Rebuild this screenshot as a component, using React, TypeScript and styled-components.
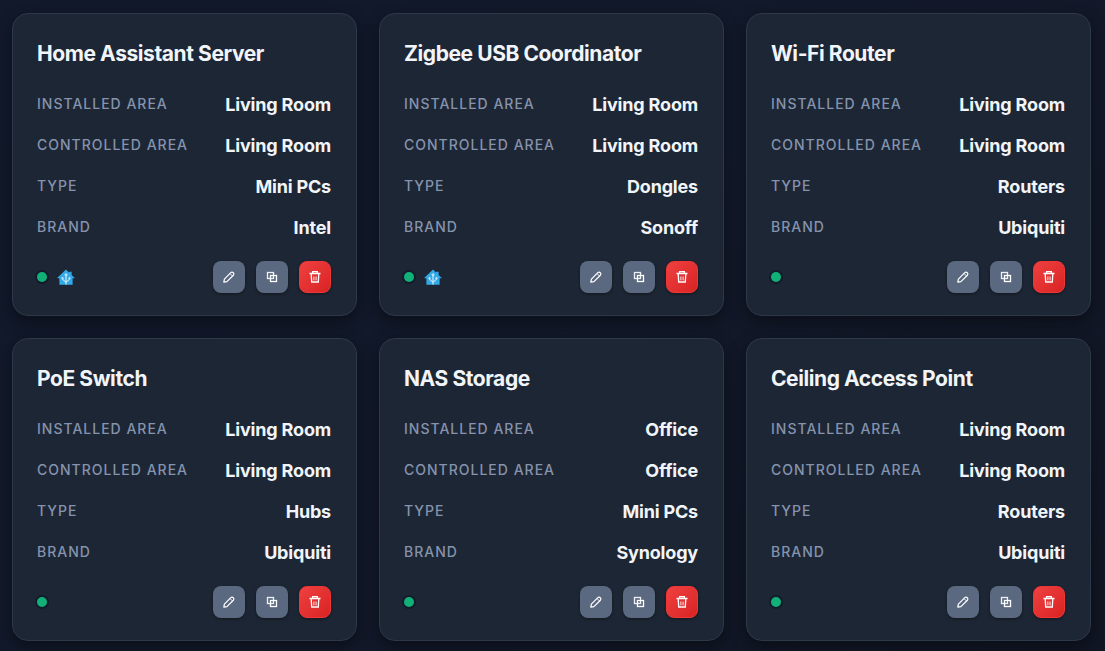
import React from "react";
import styled, { createGlobalStyle } from "styled-components";

const GlobalStyle = createGlobalStyle`
  *, *::before, *::after { box-sizing: border-box; }
  body {
    margin: 0;
    min-height: 100vh;
    background: linear-gradient(135deg, #11192b 0%, #12192a 50%, #111624 100%);
    color: #f1f5f9;
    font-family: Inter, "Liberation Sans", sans-serif;
    -webkit-font-smoothing: antialiased;
  }
`;

const Grid = styled.main`
  display: grid;
  grid-template-columns: repeat(3, minmax(0, 1fr));
  gap: 22px;
  padding: 13px 14px 10px 12px;
`;

const Card = styled.article`
  padding: 24px 25px 22px 24px;
  border: 1px solid #2d3848;
  border-radius: 16px;
  background: #1d2634;
  box-shadow: 0 6px 16px rgba(0, 0, 0, 0.4);
`;

const Title = styled.h2`
  margin: 0 0 15px;
  font-size: 21px;
  line-height: 32px;
  font-weight: 700;
  letter-spacing: -0.02em;
`;

const Details = styled.dl`
  display: flex;
  flex-direction: column;
  gap: 1px;
  margin: 0 0 13px;
`;

const Detail = styled.div`
  display: flex;
  align-items: center;
  justify-content: space-between;
  height: 40px;
`;

const Label = styled.dt`
  padding-bottom: 2px;
  color: #8593ad;
  font-size: 14px;
  line-height: 20px;
  font-weight: 500;
  letter-spacing: 1px;
  text-transform: uppercase;
`;

const Value = styled.dd`
  margin: 0;
  font-size: 18px;
  line-height: 26px;
  font-weight: 700;
  letter-spacing: -0.01em;
`;

const Footer = styled.footer`
  display: flex;
  align-items: center;
  justify-content: space-between;
`;

const Status = styled.div`
  display: flex;
  align-items: center;
  gap: 10px;
`;

const Dot = styled.span`
  width: 10px;
  height: 10px;
  border-radius: 50%;
  background: #10b078;
  box-shadow: 0 0 0 2px #131c2c;
`;

const Actions = styled.div`
  display: flex;
  gap: 11px;
`;

const ActionButton = styled.button<{ $danger?: boolean }>`
  display: grid;
  place-items: center;
  width: 32px;
  height: 32px;
  padding: 0;
  border: ${(p) => (p.$danger ? "1px solid #ef3636" : "0")};
  border-radius: 8px;
  background: ${(p) =>
    p.$danger ? "linear-gradient(135deg, #ef4040, #d92323)" : "#5b6980"};
  color: #fff;
  box-shadow: 0 1px 3px rgba(0, 0, 0, 0.4);
  cursor: pointer;
`;

const PencilIcon = () => (
  <svg width="14" height="14" viewBox="0 0 14 14" fill="none" stroke="currentColor" strokeWidth="1.2" strokeLinejoin="round" aria-hidden="true">
    <path d="M1.8 12.2 2.4 9.1 8.8 2.6Q10 1.5 11.3 2.7 12.5 3.9 11.4 5.2L4.9 11.6Z" />
    <path d="M8.1 3.6 10.4 5.9" strokeWidth="1" />
  </svg>
);

const CopyIcon = () => (
  <svg width="12" height="12" viewBox="0 0 12 12" fill="none" stroke="currentColor" strokeWidth="1.3" aria-hidden="true">
    <rect x="1.5" y="1.5" width="6" height="6" opacity=".9" />
    <rect x="4.5" y="4.5" width="6" height="6" />
  </svg>
);

const TrashIcon = () => (
  <svg width="12" height="14" viewBox="0 0 12 14" fill="none" stroke="currentColor" strokeWidth="1.3" aria-hidden="true">
    <path d="M.5 3.5H11.5M3.6 3.3V1.6H8.4V3.3M2.2 3.7 2.7 12H9.3L9.8 3.7" />
    <path d="M4.9 6.5V10.4M7.1 6.5V10.4" strokeWidth=".9" />
  </svg>
);

const HomeIcon = () => (
  <svg width="18" height="18" viewBox="0 0 18 18" role="img" aria-label="Home Assistant">
    <path d="M9 1.6 12.2 4.7V3.8H14.6V7L17.6 9.8V10.2H15.6V16.8H2.4V10.2H.4V9.8Z" fill="#34a9e8" />
    <g fill="none" stroke="#e6f5fd" strokeWidth="1">
      <path d="M9 7V16.6M5.8 10.6V11.6L9 14.2 12.2 11.6V10.6" />
      <circle cx="9" cy="6.7" r=".9" />
      <circle cx="5.5" cy="10.2" r=".7" />
      <circle cx="12.5" cy="10.2" r=".7" />
    </g>
  </svg>
);

interface Device {
  name: string;
  installed: string;
  controlled: string;
  type: string;
  brand: string;
  integrated?: boolean;
}

const devices: Device[] = [
  { name: "Home Assistant Server", installed: "Living Room", controlled: "Living Room", type: "Mini PCs", brand: "Intel", integrated: true },
  { name: "Zigbee USB Coordinator", installed: "Living Room", controlled: "Living Room", type: "Dongles", brand: "Sonoff", integrated: true },
  { name: "Wi-Fi Router", installed: "Living Room", controlled: "Living Room", type: "Routers", brand: "Ubiquiti" },
  { name: "PoE Switch", installed: "Living Room", controlled: "Living Room", type: "Hubs", brand: "Ubiquiti" },
  { name: "NAS Storage", installed: "Office", controlled: "Office", type: "Mini PCs", brand: "Synology" },
  { name: "Ceiling Access Point", installed: "Living Room", controlled: "Living Room", type: "Routers", brand: "Ubiquiti" },
];

const DeviceCard = ({ device }: { device: Device }) => {
  const rows = [
    ["Installed Area", device.installed],
    ["Controlled Area", device.controlled],
    ["Type", device.type],
    ["Brand", device.brand],
  ];
  return (
    <Card>
      <Title>{device.name}</Title>
      <Details>
        {rows.map(([label, value]) => (
          <Detail key={label}>
            <Label>{label}</Label>
            <Value>{value}</Value>
          </Detail>
        ))}
      </Details>
      <Footer>
        <Status>
          <Dot role="img" aria-label="Online" />
          {device.integrated && <HomeIcon />}
        </Status>
        <Actions>
          <ActionButton type="button" aria-label={`Edit ${device.name}`}><PencilIcon /></ActionButton>
          <ActionButton type="button" aria-label={`Duplicate ${device.name}`}><CopyIcon /></ActionButton>
          <ActionButton type="button" $danger aria-label={`Delete ${device.name}`}><TrashIcon /></ActionButton>
        </Actions>
      </Footer>
    </Card>
  );
};

export default function App() {
  return (
    <>
      <GlobalStyle />
      <Grid>
        {devices.map((device) => (
          <DeviceCard key={device.name} device={device} />
        ))}
      </Grid>
    </>
  );
}
